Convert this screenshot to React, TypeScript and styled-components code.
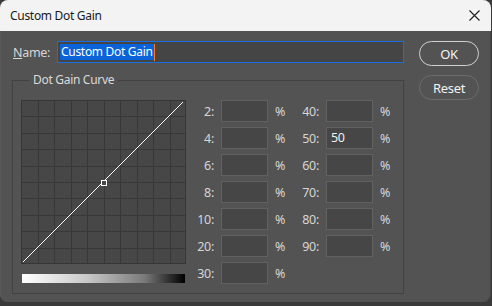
import React from 'react';
import { styled, createGlobalStyle } from 'styled-components';

const GlobalStyle = createGlobalStyle`
  html, body {
    margin: 0;
    padding: 0;
    background: #3a3a3a;
  }
  body {
    font-family: "Noto Sans", "Open Sans", sans-serif;
    font-size: 12px;
    letter-spacing: -0.3px;
  }
`;

const leftFields = ['2', '4', '6', '8', '10', '20', '30'];
const rightFields = ['40', '50', '60', '70', '80', '90'];
const values: Record<string, string> = { '50': '50' };

const CloseIcon = () => (
  <svg width="11" height="11" viewBox="0 0 11 11">
    <path d="M0.5 0.5 L10.5 10.5 M10.5 0.5 L0.5 10.5" stroke="#1b1b1b" strokeWidth="1.1" />
  </svg>
);

const CurveChart = () => {
  const w = 165;
  const h = 164;
  const cols = Array.from({ length: 9 }, (_, i) => ((i + 1) * w) / 10);
  const rows = Array.from({ length: 9 }, (_, i) => ((i + 1) * h) / 10);
  return (
    <svg width={w} height={h} viewBox={`0 0 ${w} ${h}`}>
      <rect x="0.5" y="0.5" width={w - 1} height={h - 1} fill="#474747" stroke="#363636" />
      {cols.map((x) => (
        <line key={`c${x}`} x1={Math.round(x) + 0.5} y1="1" x2={Math.round(x) + 0.5} y2={h - 1} stroke="#383838" />
      ))}
      {rows.map((y) => (
        <line key={`r${y}`} x1="1" y1={Math.round(y) + 0.5} x2={w - 1} y2={Math.round(y) + 0.5} stroke="#383838" />
      ))}
      <line x1="2" y1={h - 2} x2={w - 3} y2="2" stroke="#ffffff" strokeWidth="1" />
      <rect x={80.5} y={80.5} width="5" height="5" fill="#474747" stroke="#ffffff" />
    </svg>
  );
};

type FieldProps = { label: string; value?: string; labelWidth: number };

const Field = ({ label, value, labelWidth }: FieldProps) => (
  <FieldRow $labelWidth={labelWidth}>
    <FieldLabel>{label}:</FieldLabel>
    <NumberBox>{value}</NumberBox>
    <Percent>%</Percent>
  </FieldRow>
);

export default function App() {
  return (
    <>
      <GlobalStyle />
      <Window>
        <TitleBar>
          <Title>Custom Dot Gain</Title>
          <CloseButton>
            <CloseIcon />
          </CloseButton>
        </TitleBar>

        <Body>
          <Main>
            <NameRow>
              <NameLabel>
                <u>N</u>ame:
              </NameLabel>
              <NameInput>
                <Selected>Custom Dot Gain</Selected>
                <Caret />
              </NameInput>
            </NameRow>

            <Group>
              <Legend>Dot Gain Curve</Legend>
              <GroupInner>
                <CurveColumn>
                  <CurveChart />
                  <GradientBar />
                </CurveColumn>

                <FieldColumn>
                  {leftFields.map((f) => (
                    <Field key={f} label={f} value={values[f]} labelWidth={21} />
                  ))}
                </FieldColumn>
                <FieldColumn>
                  {rightFields.map((f) => (
                    <Field key={f} label={f} value={values[f]} labelWidth={23} />
                  ))}
                </FieldColumn>
              </GroupInner>
            </Group>
          </Main>

          <Buttons>
            <PillButton $primary>OK</PillButton>
            <PillButton>Reset</PillButton>
          </Buttons>
        </Body>
      </Window>
    </>
  );
}

const Window = styled.div`
  width: 491px;
  height: 302px;
  background: #535353;
  border-radius: 8px;
  overflow: hidden;
  box-shadow: inset -1px 0 0 #444, inset 1px 0 0 #5a5a5a;
`;

const TitleBar = styled.div`
  height: 31px;
  background: #f3f3f3;
  display: flex;
  align-items: center;
  justify-content: space-between;
  padding: 0 10px 0 10px;
`;

const Title = styled.span`
  color: #1a1a1a;
  font-size: 12px;
  line-height: 16px;
`;

const CloseButton = styled.div`
  width: 11px;
  height: 11px;
  display: flex;
  margin-right: 1px;
`;

const Body = styled.div`
  display: flex;
  align-items: flex-start;
  gap: 15px;
  padding: 10px 0 0 12px;
`;

const Main = styled.div`
  width: 392px;
  display: flex;
  flex-direction: column;
`;

const NameRow = styled.div`
  display: flex;
  align-items: center;
  height: 22px;
`;

const NameLabel = styled.span`
  width: 44px;
  padding-left: 1px;
  color: #d6d6d6;
  font-size: 12.5px;
`;

const NameInput = styled.div`
  flex: 1;
  height: 22px;
  box-sizing: border-box;
  border: 1px solid #1a6fe0;
  background: #454545;
  display: flex;
  align-items: center;
  padding-left: 2px;
`;

const Selected = styled.span`
  background: #0a63d8;
  color: #ffffff;
  font-size: 12px;
  line-height: 16px;
  padding: 0 1px;
`;

const Caret = styled.span`
  width: 1px;
  height: 17px;
  background: #ff7a1a;
`;

const Group = styled.fieldset`
  margin: 9px 0 0 0;
  padding: 0;
  min-width: 0;
  border: 1px solid #424242;
`;

const Legend = styled.legend`
  margin-left: 16px;
  padding: 0 4px;
  color: #dadada;
  font-size: 12px;
  line-height: 16px;
`;

const GroupInner = styled.div`
  display: flex;
  align-items: flex-start;
  gap: 7px;
  padding: 12px 8px 9px 8px;
`;

const CurveColumn = styled.div`
  display: flex;
  flex-direction: column;
  gap: 10px;

  svg {
    display: block;
  }
`;

const GradientBar = styled.div`
  width: 163px;
  height: 9px;
  margin-left: 1px;
  background: linear-gradient(to right, #ffffff, #c8c8c8 40%, #7a7a7a 75%, #000000);
`;

const FieldColumn = styled.div`
  display: flex;
  flex-direction: column;
  gap: 5px;
`;

const FieldRow = styled.div<{ $labelWidth: number }>`
  display: grid;
  grid-template-columns: ${({ $labelWidth }) => $labelWidth}px 47px 14px;
  column-gap: 7px;
  align-items: center;
  height: 22px;
`;

const FieldLabel = styled.span`
  text-align: right;
  color: #d6d6d6;
  font-size: 12.5px;
  white-space: nowrap;
`;

const NumberBox = styled.div`
  height: 22px;
  box-sizing: border-box;
  border: 1px solid #616161;
  background: #464646;
  color: #f0f0f0;
  font-size: 12.5px;
  line-height: 20px;
  padding-left: 4px;
`;

const Percent = styled.span`
  color: #d6d6d6;
  font-size: 12.5px;
`;

const Buttons = styled.div`
  display: flex;
  flex-direction: column;
  gap: 9px;
`;

const PillButton = styled.div<{ $primary?: boolean }>`
  width: 60px;
  height: 25px;
  box-sizing: border-box;
  border-radius: 13px;
  border: ${({ $primary }) => ($primary ? '1.5px solid #d0d0d0' : '1.5px solid #6c6c6c')};
  color: #f2f2f2;
  font-size: 13px;
  display: grid;
  place-items: center;
`;
